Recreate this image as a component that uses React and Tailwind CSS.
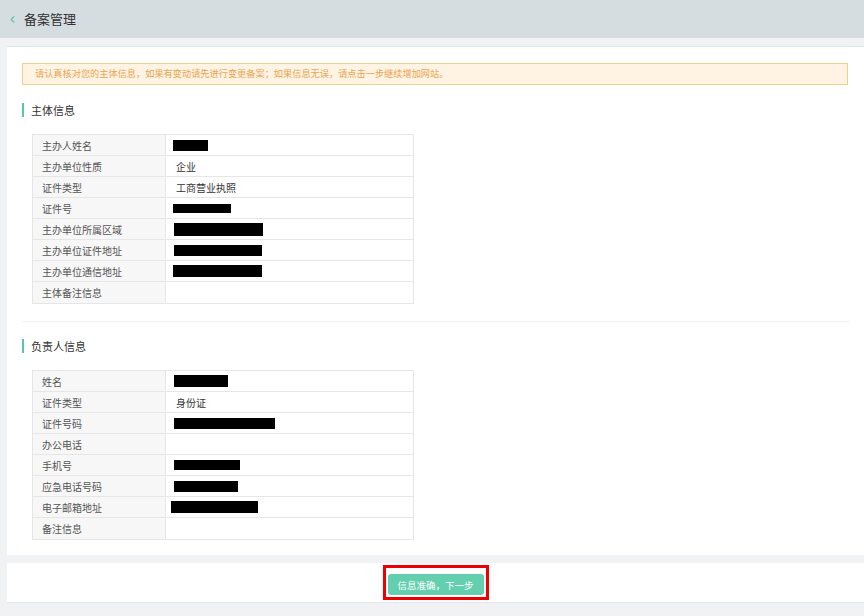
import { ChevronLeft } from 'lucide-react'

const subjectRows = [
  { label: '主办人姓名', mask: 'ml-[7px] w-[35px] h-[11px]' },
  { label: '主办单位性质', text: '企业' },
  { label: '证件类型', text: '工商营业执照' },
  { label: '证件号', mask: 'ml-[7px] w-[58px] h-[9px]' },
  { label: '主办单位所属区域', mask: 'ml-[8px] w-[89px] h-[13px]' },
  { label: '主办单位证件地址', mask: 'ml-[8px] w-[88px] h-[11px]' },
  { label: '主办单位通信地址', mask: 'ml-[7px] w-[89px] h-[12px]' },
  { label: '主体备注信息' },
]

const ownerRows = [
  { label: '姓名', mask: 'ml-[8px] w-[54px] h-[12px]' },
  { label: '证件类型', text: '身份证' },
  { label: '证件号码', mask: 'ml-[8px] w-[101px] h-[11px]' },
  { label: '办公电话' },
  { label: '手机号', mask: 'ml-[8px] w-[66px] h-[10px]' },
  { label: '应急电话号码', mask: 'ml-[8px] w-[64px] h-[11px]' },
  { label: '电子邮箱地址', mask: 'ml-[5px] w-[87px] h-[12px]' },
  { label: '备注信息' },
]

function SectionTitle({ children }) {
  return (
    <div className="flex items-center h-[14px]">
      <span className="w-[2px] h-[14px] bg-[#5cc4a9]" />
      <span className="ml-[7px] text-[11px] text-[#333]">{children}</span>
    </div>
  )
}

function InfoTable({ rows }) {
  return (
    <div className="ml-[10px] w-[382px] border border-[#e6e6e6]">
      {rows.map((r, i) => (
        <div
          key={r.label}
          className={`flex h-[21px] ${i < rows.length - 1 ? 'border-b border-[#e6e6e6]' : ''}`}
        >
          <div className="w-[133px] shrink-0 bg-[#f7f7f7] border-r border-[#e6e6e6] flex items-center pl-[9px] text-[10px] text-[#555]">
            {r.label}
          </div>
          <div className="flex-1 flex items-center text-[10px] text-[#333]">
            {r.text && <span className="pl-[10px]">{r.text}</span>}
            {r.mask && <span className={`bg-black ${r.mask}`} />}
          </div>
        </div>
      ))}
    </div>
  )
}

export default function App() {
  return (
    <div className="min-h-[616px] bg-[#f0f2f4] font-['Noto_Sans_CJK_SC','Noto_Sans',sans-serif]">
      <div className="h-[38px] bg-[#d6dde0] flex items-center pl-[7px]">
        <ChevronLeft size={11} strokeWidth={2.5} className="text-[#5cc4a9]" />
        <span className="ml-[6px] text-[13px] text-[#333]">备案管理</span>
      </div>

      <div className="pl-[7px] pt-[8px]">
        <div className="bg-white border-t border-[#dde5e9] px-[15px] pt-[16px] pb-[15px]">
          <div className="h-[22px] mr-[1px] border border-[#efd18f] bg-[#fff3e3] flex items-center pl-[12px] text-[9.2px] text-[#e9a450]">
            请认真核对您的主体信息，如果有变动请先进行变更备案；如果信息无误，请点击一步继续增加网站。
          </div>

          <div className="mt-[18px]">
            <SectionTitle>主体信息</SectionTitle>
          </div>
          <div className="mt-[17px]">
            <InfoTable rows={subjectRows} />
          </div>

          <div className="mt-[17px] border-t border-[#f0f0f0]" />

          <div className="mt-[17px]">
            <SectionTitle>负责人信息</SectionTitle>
          </div>
          <div className="mt-[17px]">
            <InfoTable rows={ownerRows} />
          </div>
        </div>

        <div className="mt-[8px] h-[40px] bg-white border-b border-[#e4e6e9] flex items-center justify-center">
          <div className="border-[3px] border-[#e00] p-[2px]">
            <button className="w-[96px] h-[21px] rounded-[3px] bg-[#63cfae] text-white text-[9.5px]">
              信息准确，下一步
            </button>
          </div>
        </div>
      </div>
    </div>
  )
}
